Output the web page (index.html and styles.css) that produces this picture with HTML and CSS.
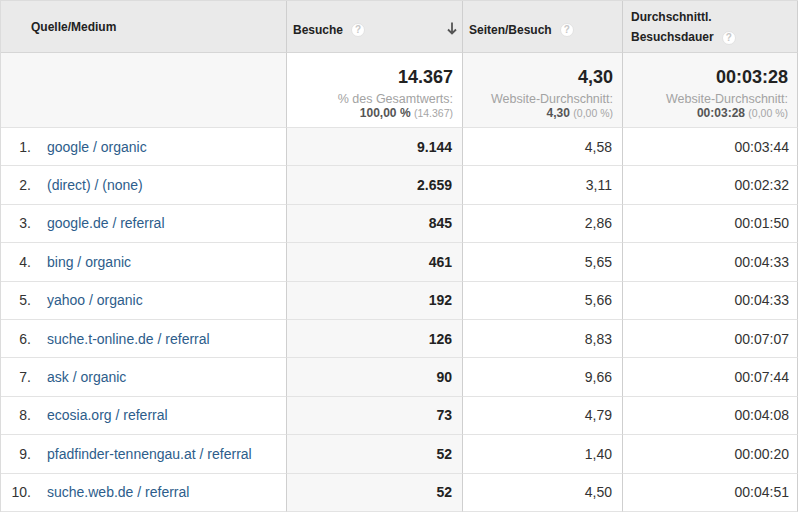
FILE: index.html
```html
<!DOCTYPE html>
<html lang="de">
<head>
<meta charset="utf-8">
<title>Quelle/Medium</title>
<link rel="stylesheet" href="styles.css">
</head>
<body>
<table class="report">
  <thead>
    <tr class="head">
      <th class="c1 h-dim">Quelle/Medium</th>
      <th class="c2 h-num">
        <div class="hd">
          <span>Besuche</span><span class="help">?</span>
          <svg class="sort" width="10" height="13" viewBox="0 0 10 13"><path d="M5 0.5 V11.5 M1 7.5 L5 11.5 L9 7.5" fill="none" stroke="#555" stroke-width="1.8"/></svg>
        </div>
      </th>
      <th class="c3 h-num"><div class="hd"><span>Seiten/Besuch</span><span class="help">?</span></div></th>
      <th class="c4 h-two">Durchschnittl.<br>Besuchsdauer<span class="help">?</span></th>
    </tr>
  </thead>
  <tbody>
    <tr class="sum">
      <td class="c1 shade"></td>
      <td class="c2">
        <div class="big">14.367</div>
        <div class="sub">% des Gesamtwerts:</div>
        <div class="subb">100,00 % <span class="tiny">(14.367)</span></div>
      </td>
      <td class="c3 shade">
        <div class="big">4,30</div>
        <div class="sub">Website-Durchschnitt:</div>
        <div class="subb">4,30 <span class="tiny">(0,00 %)</span></div>
      </td>
      <td class="c4 shade">
        <div class="big">00:03:28</div>
        <div class="sub">Website-Durchschnitt:</div>
        <div class="subb">00:03:28 <span class="tiny">(0,00 %)</span></div>
      </td>
    </tr>
    <tr class="row"><td class="c1"><span class="idx">1.</span><a class="src" href="#">google / organic</a></td><td class="c2 shade num b">9.144</td><td class="c3 num">4,58</td><td class="c4 num">00:03:44</td></tr>
    <tr class="row"><td class="c1"><span class="idx">2.</span><a class="src" href="#">(direct) / (none)</a></td><td class="c2 shade num b">2.659</td><td class="c3 num">3,11</td><td class="c4 num">00:02:32</td></tr>
    <tr class="row"><td class="c1"><span class="idx">3.</span><a class="src" href="#">google.de / referral</a></td><td class="c2 shade num b">845</td><td class="c3 num">2,86</td><td class="c4 num">00:01:50</td></tr>
    <tr class="row"><td class="c1"><span class="idx">4.</span><a class="src" href="#">bing / organic</a></td><td class="c2 shade num b">461</td><td class="c3 num">5,65</td><td class="c4 num">00:04:33</td></tr>
    <tr class="row"><td class="c1"><span class="idx">5.</span><a class="src" href="#">yahoo / organic</a></td><td class="c2 shade num b">192</td><td class="c3 num">5,66</td><td class="c4 num">00:04:33</td></tr>
    <tr class="row"><td class="c1"><span class="idx">6.</span><a class="src" href="#">suche.t-online.de / referral</a></td><td class="c2 shade num b">126</td><td class="c3 num">8,83</td><td class="c4 num">00:07:07</td></tr>
    <tr class="row"><td class="c1"><span class="idx">7.</span><a class="src" href="#">ask / organic</a></td><td class="c2 shade num b">90</td><td class="c3 num">9,66</td><td class="c4 num">00:07:44</td></tr>
    <tr class="row"><td class="c1"><span class="idx">8.</span><a class="src" href="#">ecosia.org / referral</a></td><td class="c2 shade num b">73</td><td class="c3 num">4,79</td><td class="c4 num">00:04:08</td></tr>
    <tr class="row"><td class="c1"><span class="idx">9.</span><a class="src" href="#">pfadfinder-tennengau.at / referral</a></td><td class="c2 shade num b">52</td><td class="c3 num">1,40</td><td class="c4 num">00:00:20</td></tr>
    <tr class="row"><td class="c1"><span class="idx">10.</span><a class="src" href="#">suche.web.de / referral</a></td><td class="c2 shade num b">52</td><td class="c3 num">4,50</td><td class="c4 num">00:04:51</td></tr>
  </tbody>
</table>
</body>
</html>
```

FILE: styles.css
```css
html, body {
  margin: 0;
  padding: 0;
  background: #fff;
}
body {
  font-family: "Liberation Sans", Arial, sans-serif;
  color: #222;
}
.report {
  border-collapse: separate;
  border-spacing: 0;
  table-layout: fixed;
  width: 798px;
  border-top: 1px solid #dcdcdc;
  border-left: 1px solid #dcdcdc;
}
.report th, .report td {
  box-sizing: border-box;
  border-right: 1px solid #cfcfcf;
  border-bottom: 1px solid #e3e3e3;
  padding: 0;
}
.c1 { width: 286px; }
.c2 { width: 176px; }
.c3 { width: 160px; }
.c4 { width: 175px; }

/* header */
.head { height: 52px; }
.head th {
  background: #eaeaea;
  border-bottom: 1px solid #d6d6d6;
  font-size: 12px;
  font-weight: bold;
  text-align: left;
  color: #222;
  vertical-align: middle;
}
.h-dim { padding-left: 30px !important; padding-bottom: 0 !important; }
.h-num { padding: 7px 5px 0 6px !important; }
.h-two { padding: 1px 0 0 8px !important; line-height: 20px; }
.hd {
  display: flex;
  align-items: center;
}
.help {
  display: inline-flex;
  align-items: center;
  justify-content: center;
  box-sizing: border-box;
  width: 14px;
  height: 14px;
  margin-left: 8px;
  border-radius: 50%;
  background: #fff;
  border: 1px solid #e2e2e2;
  color: #c8c8c8;
  font-size: 10px;
  font-weight: bold;
  line-height: 1;
  vertical-align: middle;
}
.sort {
  margin-left: auto;
  margin-top: -4px;
}

/* summary */
.sum { height: 75px; }
.sum td {
  vertical-align: top;
  text-align: right;
  padding: 13px 9px 0 0;
  background: #fff;
}
.sum td.shade { background: #f7f7f7; }
.big {
  font-size: 18px;
  font-weight: bold;
  line-height: 22px;
  color: #222;
}
.sub {
  margin-top: 4px;
  font-size: 12.5px;
  line-height: 14px;
  color: #a3a3a3;
}
.subb {
  font-size: 12px;
  line-height: 14px;
  font-weight: bold;
  color: #555;
}
.tiny {
  font-size: 10.5px;
  font-weight: normal;
  color: #a6a6a6;
}

/* data rows */
.row { height: 38.4px; }
.row td {
  font-size: 14px;
  vertical-align: middle;
  background: #fff;
  color: #333;
}
.row td.shade { background: #f7f7f7; }
.idx {
  display: inline-block;
  width: 30px;
  text-align: right;
  color: #333;
  margin-right: 16px;
}
.src {
  color: #2d5d8b;
  text-decoration: none;
}
.num {
  text-align: right;
  padding-right: 10px !important;
}
.c4.num { padding-right: 8px !important; }
.b { font-weight: bold; color: #222 !important; }
```
